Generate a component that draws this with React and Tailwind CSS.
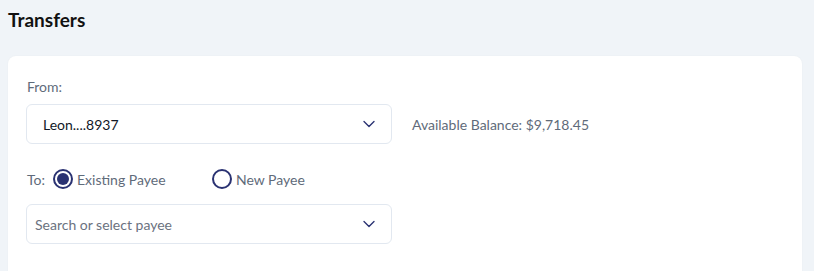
import { ChevronDown } from "lucide-react"

const Select = ({ value, placeholder }) => (
  <div className="w-[366px] h-[40px] border border-[#e2e8f0] rounded-[6px] bg-white flex items-center justify-between pl-[16px] pr-[12px]">
    {value ? (
      <span className="text-[14px] text-[#111827]">{value}</span>
    ) : (
      <span className="text-[14px] text-[#6b7280] -ml-[8px]">{placeholder}</span>
    )}
    <ChevronDown className="w-[20px] h-[20px] text-[#2a3272]" strokeWidth={1.6} />
  </div>
)

const Radio = ({ checked, label }) => (
  <label className="flex items-center gap-[4px] cursor-pointer">
    <span className="w-[20px] h-[20px] rounded-full border-2 border-[#2a3272] flex items-center justify-center bg-white">
      {checked && <span className="w-[12px] h-[12px] rounded-full bg-[#2a3272]" />}
    </span>
    <span className="text-[14px] text-[#5f6b7a]">{label}</span>
  </label>
)

export default function App() {
  return (
    <div
      className="min-h-screen bg-[#f0f4f8] pl-[8px] pr-[12px] pt-[8px]"
      style={{ fontFamily: '"Lato", "Noto Sans", sans-serif' }}
    >
      {/* Header */}
      <h1 className="text-[19px] font-bold text-[#111] leading-[24px]">Transfers</h1>

      {/* Card */}
      <div className="mt-[24px] bg-white rounded-[8px] px-[18px] pt-[22px] pb-[40px] shadow-[0_0_2px_rgba(0,0,0,0.04)]">
        <div className="text-[14px] text-[#5f6b7a] leading-[18px] ml-[1px]">From:</div>
        <div className="mt-[8px] flex items-center gap-[20px]">
          <Select value="Leon....8937" />
          <span className="text-[14px] text-[#5f6b7a]">Available Balance: $9,718.45</span>
        </div>

        <div className="mt-[25px] flex items-center h-[20px]">
          <span className="text-[14px] text-[#5f6b7a] ml-[1px] mr-[8px]">To:</span>
          <div className="w-[159px]">
            <Radio checked label="Existing Payee" />
          </div>
          <Radio label="New Payee" />
        </div>

        <div className="mt-[15px]">
          <Select placeholder="Search or select payee" />
        </div>
      </div>
    </div>
  )
}
